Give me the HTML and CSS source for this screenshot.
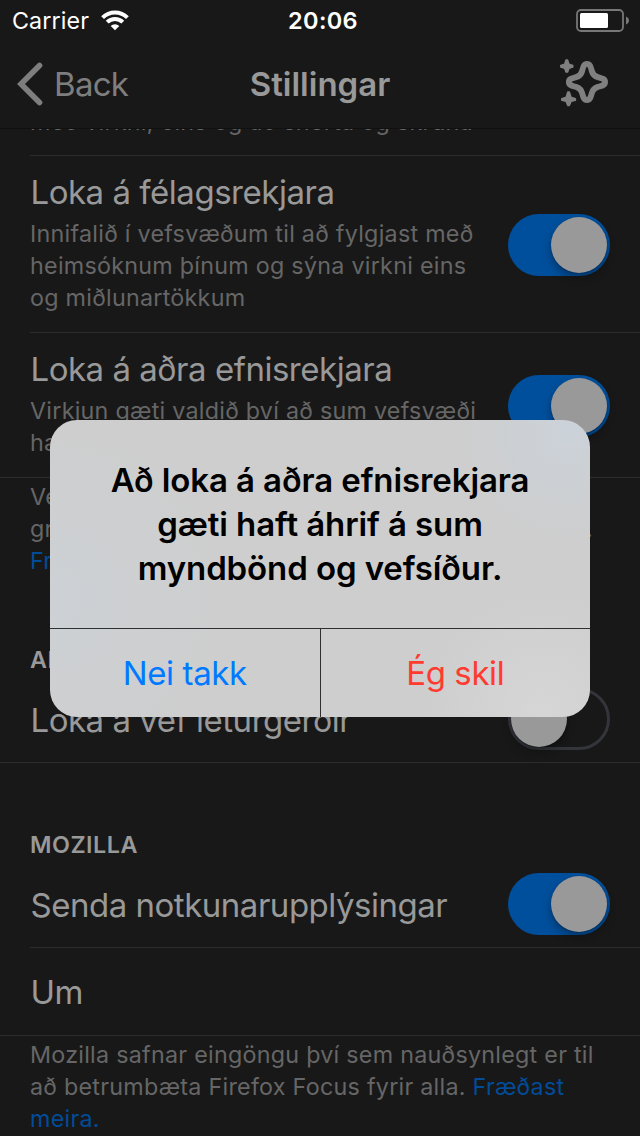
FILE: index.html
```html
<!DOCTYPE html>
<html lang="is">
<head>
<meta charset="utf-8">
<title>Stillingar</title>
<link rel="stylesheet" href="styles.css">
</head>
<body>
<div class="screen">
  <header class="status">
    <div class="carrier"><span class="carrier-name">Carrier</span>
      <svg class="wifi" width="28" height="21" viewBox="0 0 28 21"><g fill="none" stroke="#fff" stroke-width="4"><path d="M1.6 7.6a17.6 17.6 0 0 1 24.8 0"/><path d="M6.2 12.2a11.1 11.1 0 0 1 15.6 0"/></g><path d="M14 20.2l-4.3-4.3a6.2 6.2 0 0 1 8.6 0z" fill="#fff"/></svg>
    </div>
    <span class="clock">20:06</span>
    <svg class="battery" width="54" height="24" viewBox="0 0 54 24"><rect x="1" y="1" width="46" height="21" rx="4" fill="none" stroke="#777" stroke-width="1.8"/><rect x="4" y="4" width="28" height="15" rx="1.5" fill="#fff"/><path d="M50 7.5c4 1.500 4 6.500 0 8z" fill="#777"/></svg>
  </header>
  <nav class="nav">
    <div class="back"><svg width="26" height="44" viewBox="0 0 26 44"><path d="M22.500 3.500L4 22l18.500 18.500" fill="none" stroke="#7e7e7e" stroke-width="5.600" stroke-linecap="round"/></svg><span class="back-label">Back</span></div>
    <h1 class="nav-title">Stillingar</h1>
    <svg class="sparkle" width="50" height="50" viewBox="0 0 50 50"><path d="M27 6.400C30.500 6.400 30.800 9.500 32 13.800C33 17.400 34.600 19 38.200 20C42.500 21.200 45.600 21.500 45.600 25C45.600 28.500 42.500 28.800 38.200 30C34.600 31 33 32.600 32 36.200C30.800 40.500 30.500 43.600 27 43.600C23.500 43.600 23.200 40.500 22 36.200C21 32.600 19.400 31 15.800 30C11.500 28.800 8.400 28.500 8.400 25C8.400 21.500 11.500 21.200 15.800 20C19.400 19 21 17.400 22 13.800C23.200 9.500 23.500 6.400 27 6.400Z" fill="none" stroke="#808080" stroke-width="6" transform="translate(.7 .7) scale(.973)"/><g fill="#808080" stroke="#808080" stroke-width="1.500" stroke-linejoin="round"><path d="M6 3h1.500l1.500 4.300 3.800 1.200v1.500l-3.800 1.300-1.500 3.800H6l-1.300-3.800L.8 10V8.500l3.900-1.200z"/><path d="M7.800 35h1.500l1.700 5.300 4.400 1.400v1.500L11 44.400l-1.700 4H7.800l-1.600-4-4.400-1.200v-1.500l4.400-1.400z"/></g></svg>
  </nav>
  <main class="list">
    <section class="row row-tail"><p class="sub">með virkni, eins og að snerta og skruna</p></section>
    <section class="row row-detail">
      <div class="copy"><h2 class="title">Loka á félagsrekjara</h2>
      <p class="sub">Innifalið í vefsvæðum til að fylgjast með<br>heimsóknum þínum og sýna virkni eins<br>og miðlunartökkum</p></div>
      <span class="toggle on"><i class="knob"></i></span>
    </section>
    <section class="row row-detail row-last">
      <div class="copy"><h2 class="title">Loka á aðra efnisrekjara</h2>
      <p class="sub">Virkjun gæti valdið því að sum vefsvæði<br>hagi sér á óvæntan hátt</p></div>
      <span class="toggle on"><i class="knob"></i></span>
    </section>
    <p class="footnote">Veldu hvort lokað sé á auglýsingar,<br><span class="spread"><span>greiningu og aðra rekjara á vefnum</span><span>.</span></span><br><a class="link">Fræðast meira.</a></p>
    <h3 class="group">AFKÖST</h3>
    <section class="row row-single row-last">
      <h2 class="title">Loka á vef leturgerðir</h2>
      <span class="toggle off"><i class="knob"></i></span>
    </section>
    <h3 class="group group-mozilla">MOZILLA</h3>
    <section class="row row-single">
      <h2 class="title">Senda notkunarupplýsingar</h2>
      <span class="toggle on"><i class="knob"></i></span>
    </section>
    <section class="row row-about row-last"><h2 class="title">Um</h2></section>
    <p class="footnote footnote-end">Mozilla safnar eingöngu því sem nauðsynlegt er til<br>að betrumbæta Firefox Focus fyrir alla. <a class="link">Fræðast<br>meira.</a></p>
  </main>
  <div class="alert" role="alertdialog">
    <p class="message">Að loka á aðra efnisrekjara<br>gæti haft áhrif á sum<br>myndbönd og vefsíður.</p>
    <div class="actions"><button class="action cancel">Nei takk</button><button class="action confirm">Ég skil</button></div>
  </div>
</div>
</body>
</html>
```
FILE: styles.css
```css
* { box-sizing: border-box; margin: 0; padding: 0; }
body { background: #181818; font-family: Inter, "Liberation Sans", sans-serif; }
.screen { position: relative; width: 640px; height: 1136px; overflow: hidden; display: flex; flex-direction: column; background: #181818; }
.status { height: 40px; flex: none; display: grid; grid-template-columns: 1fr auto 1fr; align-items: center; padding: 1px 10px 0 12px; color: #fff; }
.carrier { display: flex; align-items: center; gap: 12px; font-size: 23.300px; line-height: 40px; letter-spacing: .1px; }
.carrier-name { width: 77px; white-space: nowrap; }
.wifi { margin-bottom: 2px; }
.clock { font-size: 23.500px; font-weight: 600; line-height: 40px; letter-spacing: .35px; padding-left: 4px; }
.battery { justify-self: end; }
.nav { height: 89px; flex: none; display: grid; grid-template-columns: 1fr auto 1fr; align-items: center; padding: 0 30px 0 17px; border-bottom: 1px solid #101010; }
.back { display: flex; align-items: center; gap: 11px; color: #7e7e7e; font-size: 33px; line-height: 40px; letter-spacing: -.7px; }
.nav-title { color: #999; font-size: 33px; line-height: 40px; font-weight: 600; letter-spacing: 0; margin-left: 13px; }
.sparkle { justify-self: end; margin-bottom: 4px; }
.list { flex: 1; overflow: hidden; }
.row { position: relative; display: flex; justify-content: space-between; align-items: center; margin-left: 30px; padding-right: 30px; border-bottom: 1px solid #2c2c2c; }
.row-last { margin-left: 0; padding-left: 30px; }
.row-tail { height: 27px; align-items: flex-end; padding-bottom: 17px; }
.row-detail { padding-top: 16px; padding-bottom: 18px; }
.row-detail .toggle { margin-top: 4px; }
.row-single { height: 87px; }
.row-single .title { padding-top: 2px; }
.row-about { height: 88px; }
.title { color: #999; font-size: 33px; line-height: 40px; font-weight: 400; letter-spacing: -.48px; padding-left: .5px; white-space: nowrap; }
.sub, .footnote { color: #666; font-size: 23.300px; line-height: 32px; letter-spacing: .26px; white-space: nowrap; }
.sub { margin-top: 6px; }
.footnote { padding: 3px 30px 0; }
.spread { display: inline-flex; width: 563px; justify-content: space-between; }
.link { color: #004c99; }
.group { height: 99px; padding: 67px 30px 0; color: #999; font-size: 23.300px; line-height: 32px; font-weight: 600; letter-spacing: .5px; }
.group-mozilla { height: 98px; padding-top: 66px; }
.toggle { flex: none; display: flex; width: 102px; height: 62px; border-radius: 31px; padding: 3px; }
.on { background: #004f9c; justify-content: flex-end; }
.off { border: 3px solid #33353b; padding: 0; }
.knob { width: 56px; height: 56px; border-radius: 50%; background: #999; box-shadow: 0 5px 10px rgba(0,0,0,.3), 0 1px 2px rgba(0,0,0,.2); }
.alert { position: absolute; left: 50px; top: 420px; width: 540px; height: 297px; border-radius: 27px; overflow: hidden; display: flex; flex-direction: column; background: radial-gradient(circle at 96% 4%, #cbd2d9 0, rgba(203,210,217,0) 110px), radial-gradient(circle at 0 60%, #cdd1d5 0, rgba(205,209,213,0) 180px), radial-gradient(circle at 91% 98%, #d6d6d6 0, rgba(214,214,214,0) 120px), #cecece; }
.message { height: 208px; padding-top: 38px; text-align: center; color: #000; font-size: 33px; line-height: 44px; font-weight: 600; letter-spacing: -.1px; }
.actions { flex: 1; display: flex; border-top: 1px solid #2d2f31; }
.action { flex: 1; border: 0; background: none; font-family: inherit; font-size: 33px; letter-spacing: -.4px; line-height: 40px; }
.action + .action { border-left: 1px solid #2d2f31; }
.cancel { color: #007aff; }
.confirm { color: #ff3b30; }
```
